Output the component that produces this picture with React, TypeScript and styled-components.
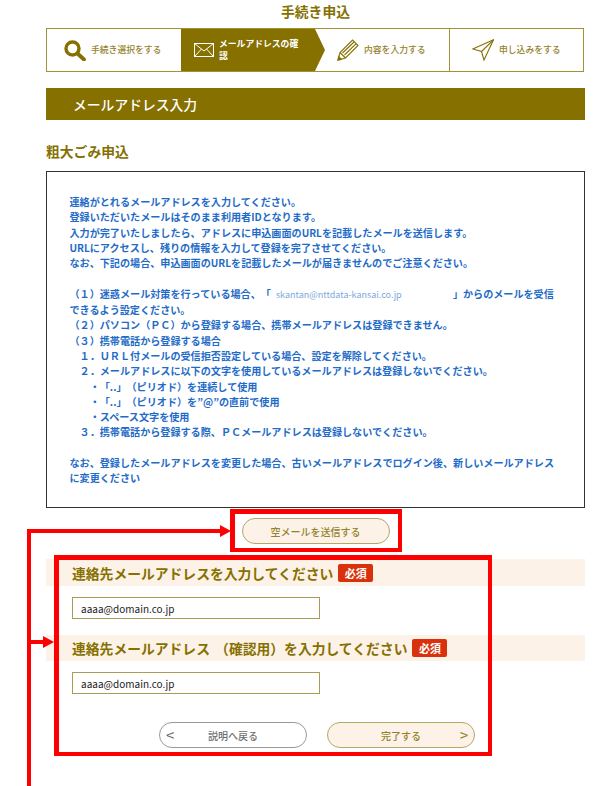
import React, { ReactElement } from 'react';
import styled, { createGlobalStyle } from 'styled-components';

const olive = '#857000';
const oliveText = '#93822a';
const oliveBorder = '#b5a866';
const cream = '#fdf2e7';
const red = '#ff0000';

const GlobalStyle = createGlobalStyle`
    html, body {
        margin: 0;
        padding: 0;
        background: #fff;
    }
    body {
        font-family: 'Noto Sans CJK JP', 'Noto Sans', sans-serif;
        text-spacing-trim: space-all;
    }
`;

const Page = styled.div`
    position: relative;
    width: 598px;
    height: 786px;
    overflow: hidden;
    box-sizing: border-box;
    padding-left: 46px;
`;

const Content = styled.main`
    width: 539px;
`;

const Title = styled.h1`
    margin: 0;
    height: 28px;
    line-height: 22px;
    font-size: 13.8px;
    font-weight: 700;
    text-align: center;
    color: ${olive};
`;

const Steps = styled.ol`
    display: grid;
    grid-template-columns: repeat(4, 1fr);
    box-sizing: border-box;
    width: 538px;
    height: 44px;
    margin: 0;
    padding: 0;
    list-style: none;
    border: 1px solid #a39136;
`;

const Step = styled.li<{ $active?: boolean; $inset: number; $divider?: boolean }>`
    position: relative;
    display: flex;
    align-items: center;
    gap: 5px;
    padding-left: ${({ $inset }): number => $inset}px;
    padding-right: 14px;
    font-size: 8.8px;
    line-height: 12px;
    font-weight: ${({ $active }): number => ($active ? 700 : 500)};
    color: ${({ $active }): string => ($active ? '#fff' : oliveText)};
    background: ${({ $active }): string => ($active ? olive : 'transparent')};
    border-left: ${({ $divider }): string => ($divider ? '1px solid #a39136' : '0')};
    ${({ $active }): string =>
        $active
            ? `&::after {
        content: '';
        position: absolute;
        top: 0;
        bottom: 0;
        left: 100%;
        width: 10px;
        background: ${olive};
        clip-path: polygon(0 0, 100% 50%, 0 100%);
    }`
            : ''}
    svg {
        flex: none;
    }
`;

const Band = styled.h2`
    margin: 16px 0 0;
    height: 32px;
    padding-left: 27px;
    line-height: 32px;
    font-size: 13.8px;
    font-weight: 500;
    color: #fff;
    background: ${olive};
`;

const Heading = styled.h3`
    margin: 21px 0 0;
    height: 21px;
    line-height: 21px;
    font-size: 13.8px;
    font-weight: 700;
    color: ${olive};
`;

const Notice = styled.section`
    box-sizing: border-box;
    height: 337px;
    margin-top: 9px;
    padding: 22px 28px 0 22.5px;
    border: 1px solid #333;
    font-size: 10.1px;
    line-height: 15.3px;
    font-weight: 700;
    color: #1f6cc8;
`;

const Line = styled.div`
    min-height: 15.3px;
    white-space: pre-wrap;
`;

const Address = styled.span`
    display: inline-block;
    width: 182px;
    box-sizing: border-box;
    padding-left: 5px;
    font-size: 9px;
    font-weight: 400;
    color: #7ba8e0;
`;

const Pill = styled.button<{ $plain?: boolean }>`
    position: relative;
    display: block;
    box-sizing: border-box;
    width: 148px;
    height: 26px;
    padding: 0;
    border: 1px solid ${({ $plain }): string => ($plain ? '#999' : oliveBorder)};
    border-radius: 13px;
    background: ${({ $plain }): string => ($plain ? '#fff' : cream)};
    color: ${({ $plain }): string => ($plain ? '#6f6f6f' : oliveText)};
    font-family: inherit;
    font-size: 10px;
    font-weight: 500;
`;

const Chevron = styled.span<{ $side: 'left' | 'right' }>`
    position: absolute;
    top: 1px;
    ${({ $side }): string => $side}: 6px;
    font-size: 15px;
    font-weight: 400;
    line-height: 22px;
`;

const SendRow = styled.div`
    display: flex;
    justify-content: center;
    margin-top: 10px;
`;

const FieldLabel = styled.label<{ $gap: number; $height: number }>`
    display: flex;
    align-items: center;
    gap: 5px;
    height: ${({ $height }): number => $height}px;
    margin-top: ${({ $gap }): number => $gap}px;
    padding-left: 26px;
    font-size: 13.8px;
    font-weight: 700;
    word-spacing: 2px;
    color: ${olive};
    background: ${cream};
`;

const Required = styled.span`
    width: 35px;
    height: 18px;
    border-radius: 2px;
    background: #d9310b;
    color: #fff;
    font-size: 11px;
    font-weight: 700;
    line-height: 18px;
    text-align: center;
`;

const Field = styled.input`
    display: block;
    box-sizing: border-box;
    width: 248px;
    height: 22px;
    margin: 11px 0 0 26px;
    padding: 0 8px;
    border: 1px solid #ab9c55;
    outline: 0;
    font-family: inherit;
    font-size: 10px;
    color: #222;
`;

const Actions = styled.div`
    display: flex;
    gap: 20px;
    margin-top: 28px;
    padding-left: 113px;
`;

const Frame = styled.div<{ $left: number; $top: number; $width: number; $height: number }>`
    position: absolute;
    left: ${({ $left }): number => $left}px;
    top: ${({ $top }): number => $top}px;
    width: ${({ $width }): number => $width}px;
    height: ${({ $height }): number => $height}px;
    box-sizing: border-box;
    border: solid ${red};
    border-width: 5px 4px 4px 5px;
    pointer-events: none;
`;

const Callout = styled.svg`
    position: absolute;
    left: 0;
    top: 0;
    pointer-events: none;
`;

const noticeLines = [
    '連絡がとれるメールアドレスを入力してください。',
    '登録いただいたメールはそのまま利用者IDとなります。',
    '入力が完了いたしましたら、アドレスに申込画面のURLを記載したメールを送信します。',
    'URLにアクセスし、残りの情報を入力して登録を完了させてください。',
    'なお、下記の場合、申込画面のURLを記載したメールが届きませんのでご注意ください。',
    '',
    'ADDRESS',
    'できるよう設定ください。',
    '（２）パソコン（ＰＣ）から登録する場合、携帯メールアドレスは登録できません。',
    '（３）携帯電話から登録する場合',
    '　１．ＵＲＬ付メールの受信拒否設定している場合、設定を解除してください。',
    '　２．メールアドレスに以下の文字を使用しているメールアドレスは登録しないでください。',
    '　　・「..」（ピリオド）を連続して使用',
    '　　・「..」（ピリオド）を”@”の直前で使用',
    '　　・スペース文字を使用',
    '　３．携帯電話から登録する際、ＰＣメールアドレスは登録しないでください。',
    '',
    'なお、登録したメールアドレスを変更した場合、古いメールアドレスでログイン後、新しいメールアドレス',
    'に変更ください',
];

const SearchIcon = (): ReactElement => (
    <svg width="22" height="21" viewBox="0 0 22 21" fill="none" stroke={olive}>
        <circle cx="8.5" cy="8.5" r="6.5" strokeWidth="3.4" />
        <path d="M13.5 13.5 L20 19.5" strokeWidth="3.8" strokeLinecap="round" />
    </svg>
);

const MailIcon = (): ReactElement => (
    <svg width="20" height="14" viewBox="0 0 20 14" fill="none" stroke="#fff" strokeWidth="1">
        <rect x="0.5" y="0.5" width="19" height="13" />
        <path d="M0.5 0.5 L10 8 L19.5 0.5 M0.5 13.5 L7.5 6 M19.5 13.5 L12.5 6" />
    </svg>
);

const PencilIcon = (): ReactElement => (
    <svg width="22" height="22" viewBox="0 0 22 22" fill="none" stroke={olive} strokeWidth="1.1">
        <path d="M1 21 L3 13.5 L15.5 1 L21 6.5 L8.5 19 Z" />
        <path d="M3 13.5 L8.5 19 M5.5 14 L17 3 M7.5 16 L19 4.8" />
        <path d="M1 21 L1.7 17.6 L4.4 20.3 Z" fill={olive} />
    </svg>
);

const PlaneIcon = (): ReactElement => (
    <svg width="22" height="22" viewBox="0 0 22 22" fill="none" stroke={olive} strokeWidth="1.1">
        <path d="M21.5 0.8 L0.8 10 L9.5 12.5 L12 21 Z" />
        <path d="M21.5 0.8 L9.5 12.5" />
    </svg>
);

const App = (): ReactElement => {
    return (
        <Page>
            <GlobalStyle />
            <Content>
                <Title>手続き申込</Title>
                <Steps>
                    <Step $inset={17}>
                        <SearchIcon />
                        手続き選択をする
                    </Step>
                    <Step $active $inset={13}>
                        <MailIcon />
                        メールアドレスの確認
                    </Step>
                    <Step $inset={22}>
                        <PencilIcon />
                        内容を入力する
                    </Step>
                    <Step $divider $inset={22}>
                        <PlaneIcon />
                        申し込みをする
                    </Step>
                </Steps>
                <Band>メールアドレス入力</Band>
                <Heading>粗大ごみ申込</Heading>
                <Notice>
                    {noticeLines.map((text, i) =>
                        text === 'ADDRESS' ? (
                            <Line key={i}>
                                （１）迷惑メール対策を行っている場合、「
                                <Address>skantan@nttdata-kansai.co.jp</Address>」からのメールを受信
                            </Line>
                        ) : (
                            <Line key={i}>{text}</Line>
                        ),
                    )}
                </Notice>
                <SendRow>
                    <Pill>空メールを送信する</Pill>
                </SendRow>
                <FieldLabel $gap={15} $height={27}>
                    連絡先メールアドレスを入力してください
                    <Required>必須</Required>
                </FieldLabel>
                <Field defaultValue="aaaa@domain.co.jp" />
                <FieldLabel $gap={16} $height={26}>
                    連絡先メールアドレス （確認用）を入力してください
                    <Required>必須</Required>
                </FieldLabel>
                <Field defaultValue="aaaa@domain.co.jp" />
                <Actions>
                    <Pill $plain>
                        <Chevron $side="left">&lt;</Chevron>
                        説明へ戻る
                    </Pill>
                    <Pill>
                        完了する
                        <Chevron $side="right">&gt;</Chevron>
                    </Pill>
                </Actions>
            </Content>
            <Frame $left={230} $top={509} $width={172} $height={43} />
            <Frame $left={54} $top={555} $width={438} $height={201} />
            <Callout width="598" height="786" viewBox="0 0 598 786">
                <path d="M29 786 V531 H222 M29 642 H45" fill="none" stroke={red} strokeWidth="4" />
                <path d="M220 525 L231 531 L220 537 Z M43 636 L54 642 L43 648 Z" fill={red} />
            </Callout>
        </Page>
    );
};

export default App;
